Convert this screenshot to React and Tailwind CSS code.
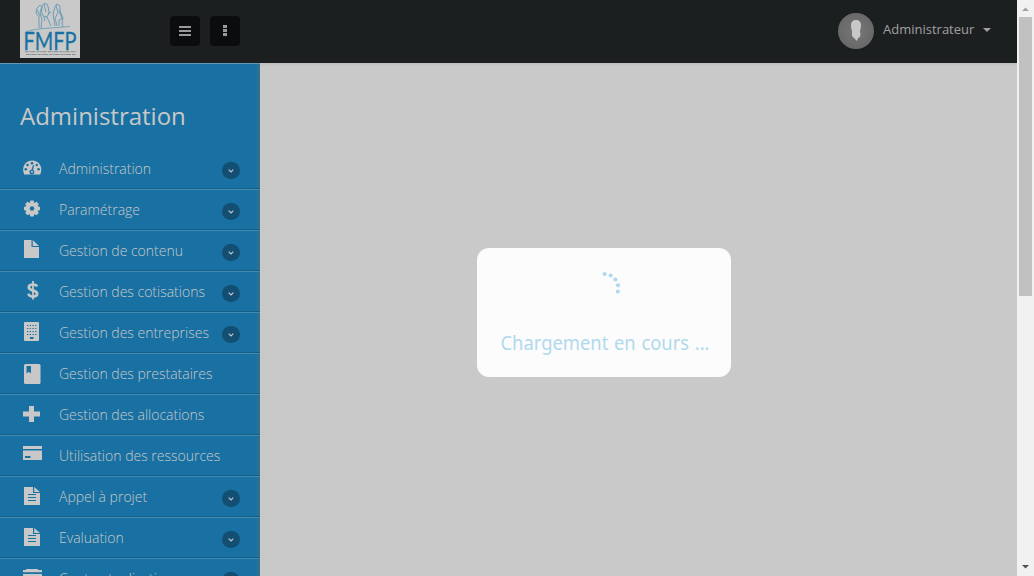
import React from "react";

const icons = {
  gauge: (
    <>
      <path d="M2.200 16.500C-1 9 3.500 2.500 10.200 2.500s11.200 6.500 8 14z" fill="#c8c8c8" />
      <g fill="#1871a2">
        <circle cx="10" cy="5.200" r="1.300" /><circle cx="5.500" cy="7" r="1.300" /><circle cx="14.800" cy="7" r="1.200" />
        <circle cx="3.800" cy="11.300" r="1.300" /><circle cx="16.600" cy="11.300" r="1.300" />
        <path d="M11 7l1.100.3-1 4.500a2.500 2.500 0 1 1-1.500-.3z" />
      </g>
      <circle cx="10" cy="13.800" r="1" fill="#c8c8c8" />
    </>
  ),
  gear: (
    <>
      <g fill="#c8c8c8">
        <circle cx="10" cy="9.500" r="6.300" />
        <rect x="8" y="1.500" width="4" height="16" rx="1" />
        <rect x="2" y="7.500" width="16" height="4" rx="1" />
        <rect x="8" y="1.500" width="4" height="16" rx="1" transform="rotate(45 10 9.500)" />
        <rect x="8" y="1.500" width="4" height="16" rx="1" transform="rotate(-45 10 9.500)" />
      </g>
      <circle cx="10" cy="9.500" r="2.200" fill="#1871a2" />
    </>
  ),
  file: <path d="M2 0h7.500v7H17v11H2zM10.700 0L17 6h-6.300z" fill="#c8c8c8" />,
  building: (
    <>
      <rect x="2" y="0" width="15" height="19" rx="1" fill="#c8c8c8" />
      <path d="M5 3.500h10M5 6.500h10M5 9.500h10M5 12.500h10" stroke="#1871a2" strokeWidth="1.200" strokeDasharray="1.300 1.400" />
      <rect x="8" y="15" width="3.500" height="2" fill="#1871a2" />
    </>
  ),
  book: (
    <>
      <rect x="2" y="1" width="16.500" height="20" rx="1.500" fill="#c8c8c8" />
      <path d="M4.500 3h4.500v7.500l-2.200-1.700-2.300 1.700z" fill="#1871a2" />
    </>
  ),
  plus: <path d="M7 2h5v5.500h6v5h-6V18H7v-5.500H1v-5h6z" fill="#c8c8c8" />,
  card: (
    <>
      <path d="M1 1h19v3H1zM1 5.500h19V15H1z" fill="#c8c8c8" />
      <rect x="3" y="11" width="5.500" height="2" fill="#1871a2" />
    </>
  ),
  doc: (
    <>
      <path d="M2 1h9v6h7v12H2zM12.200 1L18 6h-5.800z" fill="#c8c8c8" />
      <path d="M6 8.500h8M6 11.500h8M6 14.500h8" stroke="#1871a2" strokeWidth="1.200" />
    </>
  ),
  folder: <path d="M4 1h12v1H4zM1 2h19v2.200H1zM1 6h19v11H1z" fill="#c8c8c8" />,
};

const items = [
  ["Administration", "gauge", true],
  ["Paramétrage", "gear", true],
  ["Gestion de contenu", "file", true],
  ["Gestion des cotisations", "dollar", true],
  ["Gestion des entreprises", "building", true],
  ["Gestion des prestataires", "book", false],
  ["Gestion des allocations", "plus", false],
  ["Utilisation des ressources", "card", false],
  ["Appel à projet", "doc", true],
  ["Evaluation", "doc", true],
  ["Contractualisation", "folder", true],
];

function Logo() {
  return (
    <div className="h-[58px] w-[60px] bg-[#c9c9c9]">
      <svg className="overflow-visible" width="60" height="58" viewBox="0 0 60 58" fill="none">
        <g stroke="#4189ab" strokeWidth="0.800" opacity="0.850">
          <path d="M19 28V17l-3-4 1-5 3-3 2 2-2 5 2 8-1 8M17 10l3 6" />
          <path d="M22 6l2-2.500 3 .5 1.500 4 .5 5-2 4-4-1-1.500-4zM24 17l1 4M27 17l4 9M24 4l2 8M28 14l3-2" />
          <path d="M35 26l-2-12 2-7 2-3 3 2v5l3 7-1 5 1 4M36 5l2 8-3 5 2 8M39 10l3 9-3 1v6" />
          <path d="M6 32q5-2.500 18-3.500t26-2" strokeWidth="0.700" />
        </g>
        <text x="3.500" y="49.500" textLength="53" lengthAdjust="spacingAndGlyphs" fontFamily="Lato, sans-serif" fontSize="24.500" fill="#1871a2" stroke="#1871a2" strokeWidth="0.300">FMFP</text>
        <path d="M5 51.700h51M6 54.500h50" stroke="#606467" strokeWidth="0.900" strokeDasharray="3 .6 1.500 .4 5 1" opacity="0.650" />
      </svg>
    </div>
  );
}

function Row({ label, icon, expandable }) {
  return (
    <li className="flex h-[41px] shrink-0 border-t border-b border-t-[#408bb2] border-b-[#145f87] pr-5 pl-[22px] first:border-t-transparent">
      <span className="mt-[9px] h-5 w-[37px]">
        {icon === "dollar" ? (
          <svg width="22" height="22" viewBox="0 0 22 22" fill="none" stroke="#c8c8c8">
            <path d="M15 5.500Q14.300 3.500 11 3.500 6.800 3.500 6.800 6.300c0 4.200 8.400 2.400 8.400 6.300 0 2-1.600 3-4.200 3q-4 0-4.500-3" strokeWidth="2.700" />
            <path d="M11 0v18.500" strokeWidth="1.800" />
          </svg>
        ) : (
          <svg width="22" height="21" viewBox="0 0 22 21">{icons[icon]}</svg>
        )}
      </span>
      <span className="flex-1 pt-[10px] text-[14px] leading-5 font-light whitespace-nowrap">{label}</span>
      {expandable && (
        <span className="mt-[13px] flex h-[17px] w-[18px] items-center justify-center rounded-full bg-[#124f72]">
          <svg width="8" height="6" viewBox="0 0 8 6" fill="none" stroke="#c8c8c8" strokeWidth="1.100"><path d="M1.700 1.700L4 4l2.300-2.300" /></svg>
        </span>
      )}
    </li>
  );
}

export default function App() {
  return (
    <div className="flex h-[576px] w-[1034px] overflow-hidden bg-[#c9c9c9] font-['Open_Sans',sans-serif] text-[#c8c8c8]">
      <div className="relative flex w-[1017px] flex-col">
        <header className="flex h-[63px] shrink-0 items-start bg-[#1c1f20] pl-5">
          <Logo />
          <div className="mt-4 ml-[90px] flex gap-2.5">
            <button className="flex size-[30px] items-center justify-center rounded bg-[#0b0c0d]">
              <svg width="12" height="12" viewBox="0 0 12 12" fill="#999"><path d="M0 1h12v2H0zM0 5h12v2H0zM0 9h12v2H0z" /></svg>
            </button>
            <button className="flex size-[30px] items-center justify-center rounded bg-[#0b0c0d]">
              <svg width="4" height="12" viewBox="0 0 4 12" fill="#999"><path d="M0 0h4v3H0zM0 4h4v3H0zM0 8h4v3H0z" /></svg>
            </button>
          </div>
          <div className="mt-[13px] mr-[26px] ml-auto flex">
            <svg width="36" height="36" viewBox="0 0 36 36">
              <defs><radialGradient id="avatar"><stop offset="0" stopColor="#777" /><stop offset="1" stopColor="#686868" /></radialGradient></defs>
              <circle cx="18" cy="18" r="18" fill="url(#avatar)" />
              <path d="M13 12c0-3 2-5 5-5s5 2 5 5c0 3-1 5-1 7 1 2 0 4 0 5l-2 1-1 3-3-3-2-2v-6c-1-1-1-3-1-5z" fill="#c8c8c8" />
            </svg>
            <span className="ml-[9px] w-[92px] pt-[7px] text-[13px] leading-[19px] whitespace-nowrap text-[#a0a0a0]">Administrateur</span>
            <svg className="mt-[15px] ml-2" width="8" height="4" viewBox="0 0 8 4" fill="#a0a0a0"><path d="M0 0h8L4 4z" /></svg>
          </div>
        </header>
        <div className="flex min-h-0 flex-1">
          <aside className="flex w-[260px] flex-col overflow-hidden border-t border-t-[#6398b2] bg-[#1871a2] bg-[linear-gradient(to_right,transparent_255px,#33718e_260px)]">
            <h1 className="mt-[35px] ml-5 h-[49px] shrink-0 text-[24px] leading-[34px] font-normal">Administration</h1>
            <ul className="flex flex-col">
              {items.map(([label, icon, expandable]) => <Row key={label} label={label} icon={icon} expandable={expandable} />)}
            </ul>
          </aside>
          <main className="flex-1 bg-[linear-gradient(to_bottom,#bdbdbd,#c9c9c9_3px)]" />
        </div>
        <div role="status" className="absolute top-[248px] left-[477px] flex h-[129px] w-[254px] flex-col rounded-xl bg-[#fcfcfc] pt-[21px] pl-6">
          <svg className="ml-[98px]" width="24" height="28" viewBox="0 0 24 28" fill="#b0d9ee">
            <circle cx="5.700" cy="5" r="2.100" /><circle cx="11.700" cy="6.500" r="2.100" /><circle cx="16.300" cy="10.500" r="2.100" /><circle cx="19" cy="16.300" r="2.100" /><circle cx="18.800" cy="22.500" r="2.100" />
          </svg>
          <svg className="mt-7 overflow-visible" width="220" height="38" viewBox="0 0 220 38">
            <text x="-0.500" y="25" textLength="209" lengthAdjust="spacingAndGlyphs" fontFamily="Noto Sans, sans-serif" fontSize="20.500" wordSpacing="1" fill="#b0d9ee">Chargement en cours ...</text>
          </svg>
        </div>
      </div>
      <div className="flex w-[17px] flex-col items-center justify-between bg-[#f1f1f1]">
        <div className="flex flex-col items-center">
          <svg width="17" height="17" viewBox="0 0 17 17" fill="#a3a3a3"><path d="M5 11h7L8.500 7.500z" /></svg>
          <div className="h-[279px] w-[13px] bg-[#c1c1c1]" />
        </div>
        <svg width="17" height="17" viewBox="0 0 17 17" fill="#505050"><path d="M5 6h7L8.500 9.500z" /></svg>
      </div>
    </div>
  );
}
